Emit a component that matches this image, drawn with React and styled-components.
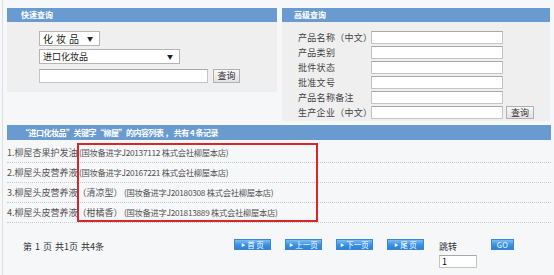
import styled, { createGlobalStyle } from "styled-components";

const GlobalStyle = createGlobalStyle`
  html, body {
    margin: 0;
    padding: 0;
    background: #f5f7f9;
  }
  body {
    font-family: "Noto Sans CJK SC", "Noto Sans", sans-serif;
    color: #444;
  }
`;

const advFields = [
  "产品名称（中文）",
  "产品类别",
  "批件状态",
  "批准文号",
  "产品名称备注",
  "生产企业（中文）",
];

const records = [
  { name: "1.柳屋杏果护发油", detail: " (国妆备进字J20137112 株式会社柳屋本店)" },
  { name: "2.柳屋头皮营养液", detail: " (国妆备进字J20167221 株式会社柳屋本店)" },
  { name: "3.柳屋头皮营养液（清凉型）", detail: " (国妆备进字J20180308 株式会社柳屋本店)" },
  { name: "4.柳屋头皮营养液（柑橘香）", detail: " (国妆备进字J201813889 株式会社柳屋本店)" },
];

const pageButtons = ["首 页", "上一页", "下一页", "尾 页"];

const Page = styled.div`
  margin-left: 2px;
  border-left: 1px solid #dde1e5;
  padding: 8px 0 0 4px;
  min-height: 267px;
`;

const TopRow = styled.div`
  display: flex;
  align-items: flex-start;
  gap: 5px;
`;

const Panel = styled.div`
  width: ${(p) => p.$width}px;
  background: #efefef;
`;

const PanelHead = styled.div`
  height: 14px;
  line-height: 14px;
  background: #6a9bd0;
  color: #fff;
  font-size: 8px;
  font-weight: 700;
  padding-left: ${(p) => p.$indent}px;
`;

const QuickBody = styled.div`
  height: 61px;
  padding: 9px 0 0 32px;
  display: flex;
  flex-direction: column;
  gap: 3px;
`;

const SelectBox = styled.div`
  width: ${(p) => p.$width}px;
  height: 15px;
  box-sizing: border-box;
  background: #fff;
  border: 1px solid #b5b5b5;
  display: flex;
  align-items: center;
  justify-content: space-between;
  padding: 0 6px 0 3px;
  font-size: ${(p) => p.$size}px;
  letter-spacing: ${(p) => p.$spacing}px;
  color: #222;
`;

const Caret = styled.span`
  font-size: 6px;
  color: #222;
  letter-spacing: 0;
`;

const InputRow = styled.div`
  display: flex;
  align-items: center;
  gap: 5px;
  margin-top: 2px;
`;

const TextInput = styled.div`
  width: ${(p) => p.$width}px;
  height: ${(p) => p.$height}px;
  box-sizing: border-box;
  background: #fff;
  border: 1px solid #c4c4c4;
  border-top-color: #a8a8a8;
  font-size: 9px;
  line-height: ${(p) => p.$height - 2}px;
  padding-left: 2px;
  color: #111;
`;

const GrayButton = styled.div`
  width: ${(p) => p.$width}px;
  height: ${(p) => p.$height}px;
  box-sizing: border-box;
  border: 1px solid #b0b0b0;
  background: linear-gradient(#f8f8f8, #e2e2e2);
  font-size: 9px;
  line-height: ${(p) => p.$height - 2}px;
  text-align: center;
  color: #333;
`;

const AdvBody = styled.div`
  height: 90px;
  padding: 9px 0 0 16px;
  display: grid;
  grid-template-columns: 73px 132px auto;
  grid-auto-rows: 13px;
  row-gap: 2px;
  align-items: center;
`;

const FieldLabel = styled.div`
  font-size: 9px;
  line-height: 13px;
  color: #444;
  white-space: nowrap;
  letter-spacing: 0.3px;
`;

const ButtonCell = styled.div`
  padding-left: 3px;
`;

const Result = styled.div`
  width: 544px;
  margin-top: 4px;
`;

const ResultHead = styled.div`
  height: 15px;
  line-height: 15px;
  background: #6a9bd0;
  color: #fff;
  font-size: 8px;
  font-weight: 700;
  padding-left: 14px;
  white-space: nowrap;
  letter-spacing: -0.5px;
`;

const Rows = styled.div`
  position: relative;
  margin-top: 3px;
`;

const Row = styled.div`
  height: 19px;
  line-height: 19px;
  border-bottom: 1px dotted #c9c9c9;
  font-size: 9px;
  color: #555;
  white-space: nowrap;
`;

const Detail = styled.span`
  font-size: 8.3px;
  letter-spacing: -0.3px;
`;

const Highlight = styled.div`
  position: absolute;
  left: 70px;
  top: 0;
  width: 241px;
  height: 79px;
  box-sizing: border-box;
  border: 2px solid #d9262a;
`;

const Pager = styled.div`
  display: flex;
  align-items: flex-start;
  padding: 16px 0 0 16px;
`;

const PagerInfo = styled.div`
  width: 211px;
  margin-top: 2px;
  font-size: 9px;
  line-height: 11px;
  color: #333;
  word-spacing: 1px;
`;

const ButtonGroup = styled.div`
  display: flex;
  gap: 14px;
`;

const BlueButton = styled.div`
  width: ${(p) => p.$width}px;
  height: 11px;
  box-sizing: border-box;
  border: 1px solid #3b86d6;
  background: linear-gradient(#7dbdf5, #3a90e2 55%, #2f82d6);
  color: #fff;
  font-size: 7.5px;
  line-height: 9px;
  text-align: center;
  white-space: nowrap;
  letter-spacing: ${(p) => p.$spacing || 0}px;
`;

const Arrow = styled.span`
  font-size: 4px;
  vertical-align: 1px;
  margin-right: 2px;
`;

const Jump = styled.div`
  margin-left: 15px;
  display: flex;
  flex-direction: column;
  gap: 3px;
  padding-top: 3px;
`;

const JumpLabel = styled.div`
  font-size: 9px;
  line-height: 10px;
  color: #333;
`;

const GoWrap = styled.div`
  margin-left: 14px;
`;

export default function App() {
  return (
    <>
      <GlobalStyle />
      <Page>
        <TopRow>
          <Panel $width={270}>
            <PanelHead $indent={14}>快速查询</PanelHead>
            <QuickBody>
              <SelectBox $width={61} $size={10} $spacing={3}>
                化妆品<Caret>▼</Caret>
              </SelectBox>
              <SelectBox $width={141} $size={9} $spacing={0}>
                进口化妆品<Caret>▼</Caret>
              </SelectBox>
              <InputRow>
                <TextInput $width={169} $height={14} />
                <GrayButton $width={27} $height={14}>查询</GrayButton>
              </InputRow>
            </QuickBody>
          </Panel>
          <Panel $width={268}>
            <PanelHead $indent={12}>高级查询</PanelHead>
            <AdvBody>
              {advFields.map((label, i) => (
                <>
                  <FieldLabel key={"l" + i}>{label}</FieldLabel>
                  <TextInput key={"i" + i} $width={132} $height={13} />
                  <ButtonCell key={"b" + i}>
                    {i === advFields.length - 1 && (
                      <GrayButton $width={28} $height={13}>查询</GrayButton>
                    )}
                  </ButtonCell>
                </>
              ))}
            </AdvBody>
          </Panel>
        </TopRow>

        <Result>
          <ResultHead>“进口化妆品”关键字“柳屋”的内容列表 ， 共有 4 条记录</ResultHead>
          <Rows>
            {records.map((r) => (
              <Row key={r.name}>
                {r.name}
                <Detail>{r.detail}</Detail>
              </Row>
            ))}
            <Highlight />
          </Rows>
          <Pager>
            <PagerInfo>第 1 页 共1页 共4条</PagerInfo>
            <ButtonGroup>
              {pageButtons.map((label) => (
                <BlueButton key={label} $width={37}>
                  <Arrow>▶</Arrow>
                  {label}
                </BlueButton>
              ))}
            </ButtonGroup>
            <Jump>
              <JumpLabel>跳转</JumpLabel>
              <TextInput $width={38} $height={13}>1</TextInput>
            </Jump>
            <GoWrap>
              <BlueButton $width={23} $spacing={0.5}>GO</BlueButton>
            </GoWrap>
          </Pager>
        </Result>
      </Page>
    </>
  );
}
